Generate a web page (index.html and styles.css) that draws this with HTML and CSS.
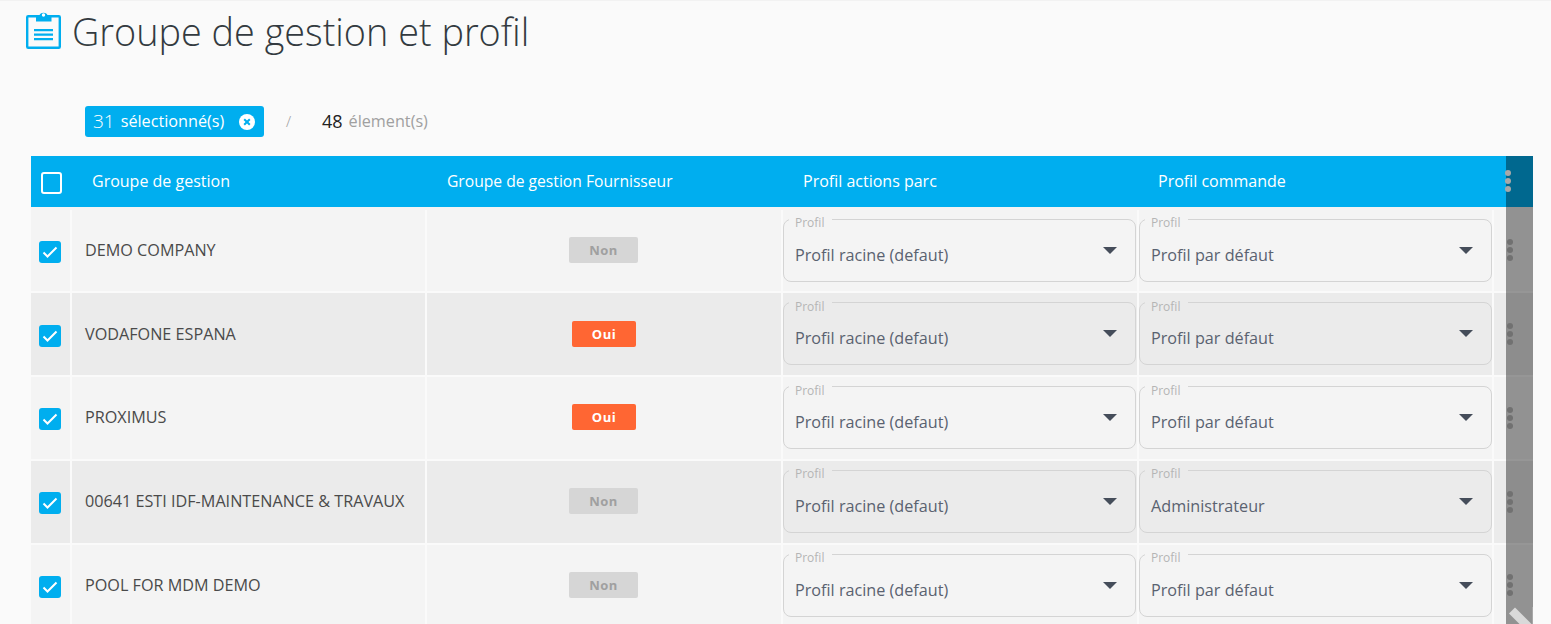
FILE: index.html
```html
<!DOCTYPE html>
<html lang="fr">
<head>
<meta charset="utf-8">
<title>Groupe de gestion et profil</title>
<link rel="stylesheet" href="styles.css">
</head>
<body>
<div class="app">
  <header class="page-head">
    <svg class="page-icon" width="35" height="39" viewBox="0 0 35 39">
      <rect x="1.200" y="6.200" width="32.600" height="31.600" rx="1" fill="none" stroke="#00aeef" stroke-width="2.400"/>
      <path fill="#00aeef" d="M10 6h3.200a4.500 4.500 0 0 1 8.600 0H25.500v5.500H10z"/>
      <circle cx="17.500" cy="5" r="1.700" fill="#fff"/>
      <path fill="#00aeef" d="M8 19h19v2.200H8zM8 23.500h19v2.200H8zM8 28h19v2.200H8z"/>
    </svg>
    <h1 class="page-title">Groupe de gestion et profil</h1>
  </header>
  <div class="summary">
    <div class="chip"><span class="chip-num">31</span><span class="chip-label">sélectionné(s)</span>
      <svg class="chip-x" width="16" height="16" viewBox="0 0 16 16"><circle cx="8" cy="8" r="8" fill="#fff"/><path d="M5.200 5.200l5.600 5.600M10.800 5.200l-5.600 5.600" stroke="#00aeef" stroke-width="2"/></svg>
    </div>
    <span class="slash">/</span>
    <span class="count"><span class="count-num">48</span><span class="count-label">élement(s)</span></span>
  </div>
  <div class="table">
    <div class="thead">
      <span class="head-check"></span>
      <span class="th th-name">Groupe de gestion</span>
      <span class="th th-supplier">Groupe de gestion Fournisseur</span>
      <span class="th th-action">Profil actions parc</span>
      <span class="th th-order">Profil commande</span>
      <span></span>
    </div>
    <div class="tbody">
      <div class="row">
        <div class="cell cell-check"><span class="check"><svg width="22" height="22" viewBox="0 0 22 22"><path d="M4.500 11.500l4 4 9-9" fill="none" stroke="#fff" stroke-width="2"/></svg></span></div>
        <div class="cell cell-name">DEMO COMPANY</div>
        <div class="cell cell-badge"><span class="badge badge-no">Non</span></div>
        <div class="cell cell-select"><fieldset class="select"><legend>Profil</legend><span class="select-value">Profil racine (defaut)</span><span class="caret"></span></fieldset></div>
        <div class="cell cell-select"><fieldset class="select"><legend>Profil</legend><span class="select-value">Profil par défaut</span><span class="caret"></span></fieldset></div>
        <div class="cell cell-more"><span class="dots"><i></i><i></i><i></i></span></div>
      </div>
      <div class="row row-alt">
        <div class="cell cell-check"><span class="check"><svg width="22" height="22" viewBox="0 0 22 22"><path d="M4.500 11.500l4 4 9-9" fill="none" stroke="#fff" stroke-width="2"/></svg></span></div>
        <div class="cell cell-name">VODAFONE ESPANA</div>
        <div class="cell cell-badge"><span class="badge badge-yes">Oui</span></div>
        <div class="cell cell-select"><fieldset class="select"><legend>Profil</legend><span class="select-value">Profil racine (defaut)</span><span class="caret"></span></fieldset></div>
        <div class="cell cell-select"><fieldset class="select"><legend>Profil</legend><span class="select-value">Profil par défaut</span><span class="caret"></span></fieldset></div>
        <div class="cell cell-more"><span class="dots"><i></i><i></i><i></i></span></div>
      </div>
      <div class="row">
        <div class="cell cell-check"><span class="check"><svg width="22" height="22" viewBox="0 0 22 22"><path d="M4.500 11.500l4 4 9-9" fill="none" stroke="#fff" stroke-width="2"/></svg></span></div>
        <div class="cell cell-name">PROXIMUS</div>
        <div class="cell cell-badge"><span class="badge badge-yes">Oui</span></div>
        <div class="cell cell-select"><fieldset class="select"><legend>Profil</legend><span class="select-value">Profil racine (defaut)</span><span class="caret"></span></fieldset></div>
        <div class="cell cell-select"><fieldset class="select"><legend>Profil</legend><span class="select-value">Profil par défaut</span><span class="caret"></span></fieldset></div>
        <div class="cell cell-more"><span class="dots"><i></i><i></i><i></i></span></div>
      </div>
      <div class="row row-alt">
        <div class="cell cell-check"><span class="check"><svg width="22" height="22" viewBox="0 0 22 22"><path d="M4.500 11.500l4 4 9-9" fill="none" stroke="#fff" stroke-width="2"/></svg></span></div>
        <div class="cell cell-name">00641 ESTI IDF-MAINTENANCE &amp; TRAVAUX</div>
        <div class="cell cell-badge"><span class="badge badge-no">Non</span></div>
        <div class="cell cell-select"><fieldset class="select"><legend>Profil</legend><span class="select-value">Profil racine (defaut)</span><span class="caret"></span></fieldset></div>
        <div class="cell cell-select"><fieldset class="select"><legend>Profil</legend><span class="select-value">Administrateur</span><span class="caret"></span></fieldset></div>
        <div class="cell cell-more"><span class="dots"><i></i><i></i><i></i></span></div>
      </div>
      <div class="row">
        <div class="cell cell-check"><span class="check"><svg width="22" height="22" viewBox="0 0 22 22"><path d="M4.500 11.500l4 4 9-9" fill="none" stroke="#fff" stroke-width="2"/></svg></span></div>
        <div class="cell cell-name">POOL FOR MDM DEMO</div>
        <div class="cell cell-badge"><span class="badge badge-no">Non</span></div>
        <div class="cell cell-select"><fieldset class="select"><legend>Profil</legend><span class="select-value">Profil racine (defaut)</span><span class="caret"></span></fieldset></div>
        <div class="cell cell-select"><fieldset class="select"><legend>Profil</legend><span class="select-value">Profil par défaut</span><span class="caret"></span></fieldset></div>
        <div class="cell cell-more"><span class="dots"><i></i><i></i><i></i></span></div>
      </div>
    </div>
    <div class="actions-shade">
      <span class="shade-dots"><i></i><i></i><i></i></span>
      <svg class="handle" width="27" height="20" viewBox="0 0 27 20"><path d="M3 6.500L9 0.500 27 18.500V20H16.500z" fill="#d9d9d9"/><path d="M26 0h1v20h-1z" fill="#a8a8a8"/></svg>
    </div>
  </div>
</div>
</body>
</html>
```
FILE: styles.css
```css
* { box-sizing: border-box; }
html, body { margin: 0; height: 100%; overflow: hidden; }
body {
  background: #fafafa;
  font-family: "Open Sans", "Liberation Sans", sans-serif;
  color: #444;
}
.app { height: 624px; overflow: hidden; border-top: 1px solid #f2f2f2; }

.page-head { display: flex; align-items: flex-start; padding: 9px 0 0 26px; height: 105px; }
.page-icon { flex: none; }
.page-title {
  margin: 0 0 0 11px;
  font-size: 37.800px;
  line-height: 44px;
  font-weight: 300;
  color: #333a40;
}

.summary { display: flex; align-items: center; height: 31px; padding-left: 85px; }
.chip {
  display: flex; align-items: center;
  width: 179px; height: 31px;
  padding: 0 0 2px 8px;
  background: #00aeef;
  border-radius: 3px;
  color: #fff;
  font-size: 16.200px;
  white-space: nowrap;
}
.chip-num { font-size: 19px; font-weight: 350; }
.chip-label { margin-left: 6px; }
.chip-x { margin: 2px 0 0 15px; }
.slash { margin: -2px 0 0 22px; width: 36px; color: #999; font-size: 15px; font-weight: 300; }
.count { display: flex; align-items: center; margin-top: -2px; font-size: 16.200px; color: #a0a0a0; }
.count-num { font-size: 18px; font-weight: 400; color: #222; }
.count-label { margin-left: 6px; }

.table { position: relative; margin: 19px 18px 0 31px; }
.thead, .row {
  display: grid;
  grid-template-columns: 39px 353px 354px 354px 353px 39px;
  column-gap: 2px;
}
.thead { height: 51px; background: #00aeef; align-items: center; color: #fff; font-size: 16px; }
.head-check {
  width: 21px; height: 22px; margin: 2px 0 0 10px;
  border: 2px solid #fff; border-radius: 3px;
}
.th { white-space: nowrap; padding-bottom: 2px; }
.th-name { padding-left: 20px; }
.th-supplier { padding-left: 20px; font-size: 15.650px; }
.th-action { padding-left: 20px; }
.th-order { padding-left: 19px; }

.tbody { background: #f4f4f4; padding-top: 2.500px; }
.row { height: 83.750px; padding-bottom: 2px; background: #fafafa; }
.cell { background: #f4f4f4; display: flex; align-items: center; min-width: 0; }
.row-alt .cell { background: #ebebeb; }
.cell-check { padding: 3px 0 0 8px; }
.check { display: block; width: 22px; height: 22px; background: #00aeef; border-radius: 3px; }
.check svg { display: block; }
.cell-name { padding: 0 0 1px 13px; font-size: 16.200px; color: #4a4a4a; white-space: nowrap; }
.cell-badge { justify-content: center; padding-bottom: 1px; }
.badge {
  display: flex; align-items: center; justify-content: center;
  height: 26px; border-radius: 2px;
  font-size: 13px; font-weight: 700; letter-spacing: .5px;
}
.badge-no { width: 69px; margin-left: -1px; background: #d6d6d6; color: #a0a0a0; }
.badge-yes { width: 64px; background: #ff6633; color: #fff; }

.select {
  position: relative;
  display: block;
  width: 353px; height: 72.500px;
  margin: -10.100px 0 0 0;
  padding: 0;
  border: 1px solid #d4d4d4;
  border-radius: 8px;
  min-width: 0;
}
.select legend {
  margin-left: 5px;
  padding: 8px 8px 0 6px;
  font-size: 12px;
  line-height: 12px;
  height: 20px;
  color: #b5b5b5;
}
.select-value { display: block; margin-top: 13.500px; padding-left: 11px; font-size: 16.200px; line-height: 24px; color: #5a6270; }
.caret {
  position: absolute; right: 18px; top: 17.500px;
  border-left: 7px solid transparent;
  border-right: 7px solid transparent;
  border-top: 7px solid #454d5a;
}
.cell-more { padding-left: 13px; }
.dots, .shade-dots { display: flex; flex-direction: column; gap: 2px; }
.dots i, .shade-dots i { display: block; width: 6px; height: 6px; border-radius: 50%; }
.dots i { background: #bcbcbc; }
.shade-dots i { background: #a8a8a8; }

.actions-shade {
  position: absolute; top: 0; bottom: 0; left: 1475px; width: 27px;
  background: rgba(0, 0, 0, .4);
}
.shade-dots { position: absolute; left: -1px; top: 14px; }
.handle { position: absolute; left: 0; top: 451px; }
```
